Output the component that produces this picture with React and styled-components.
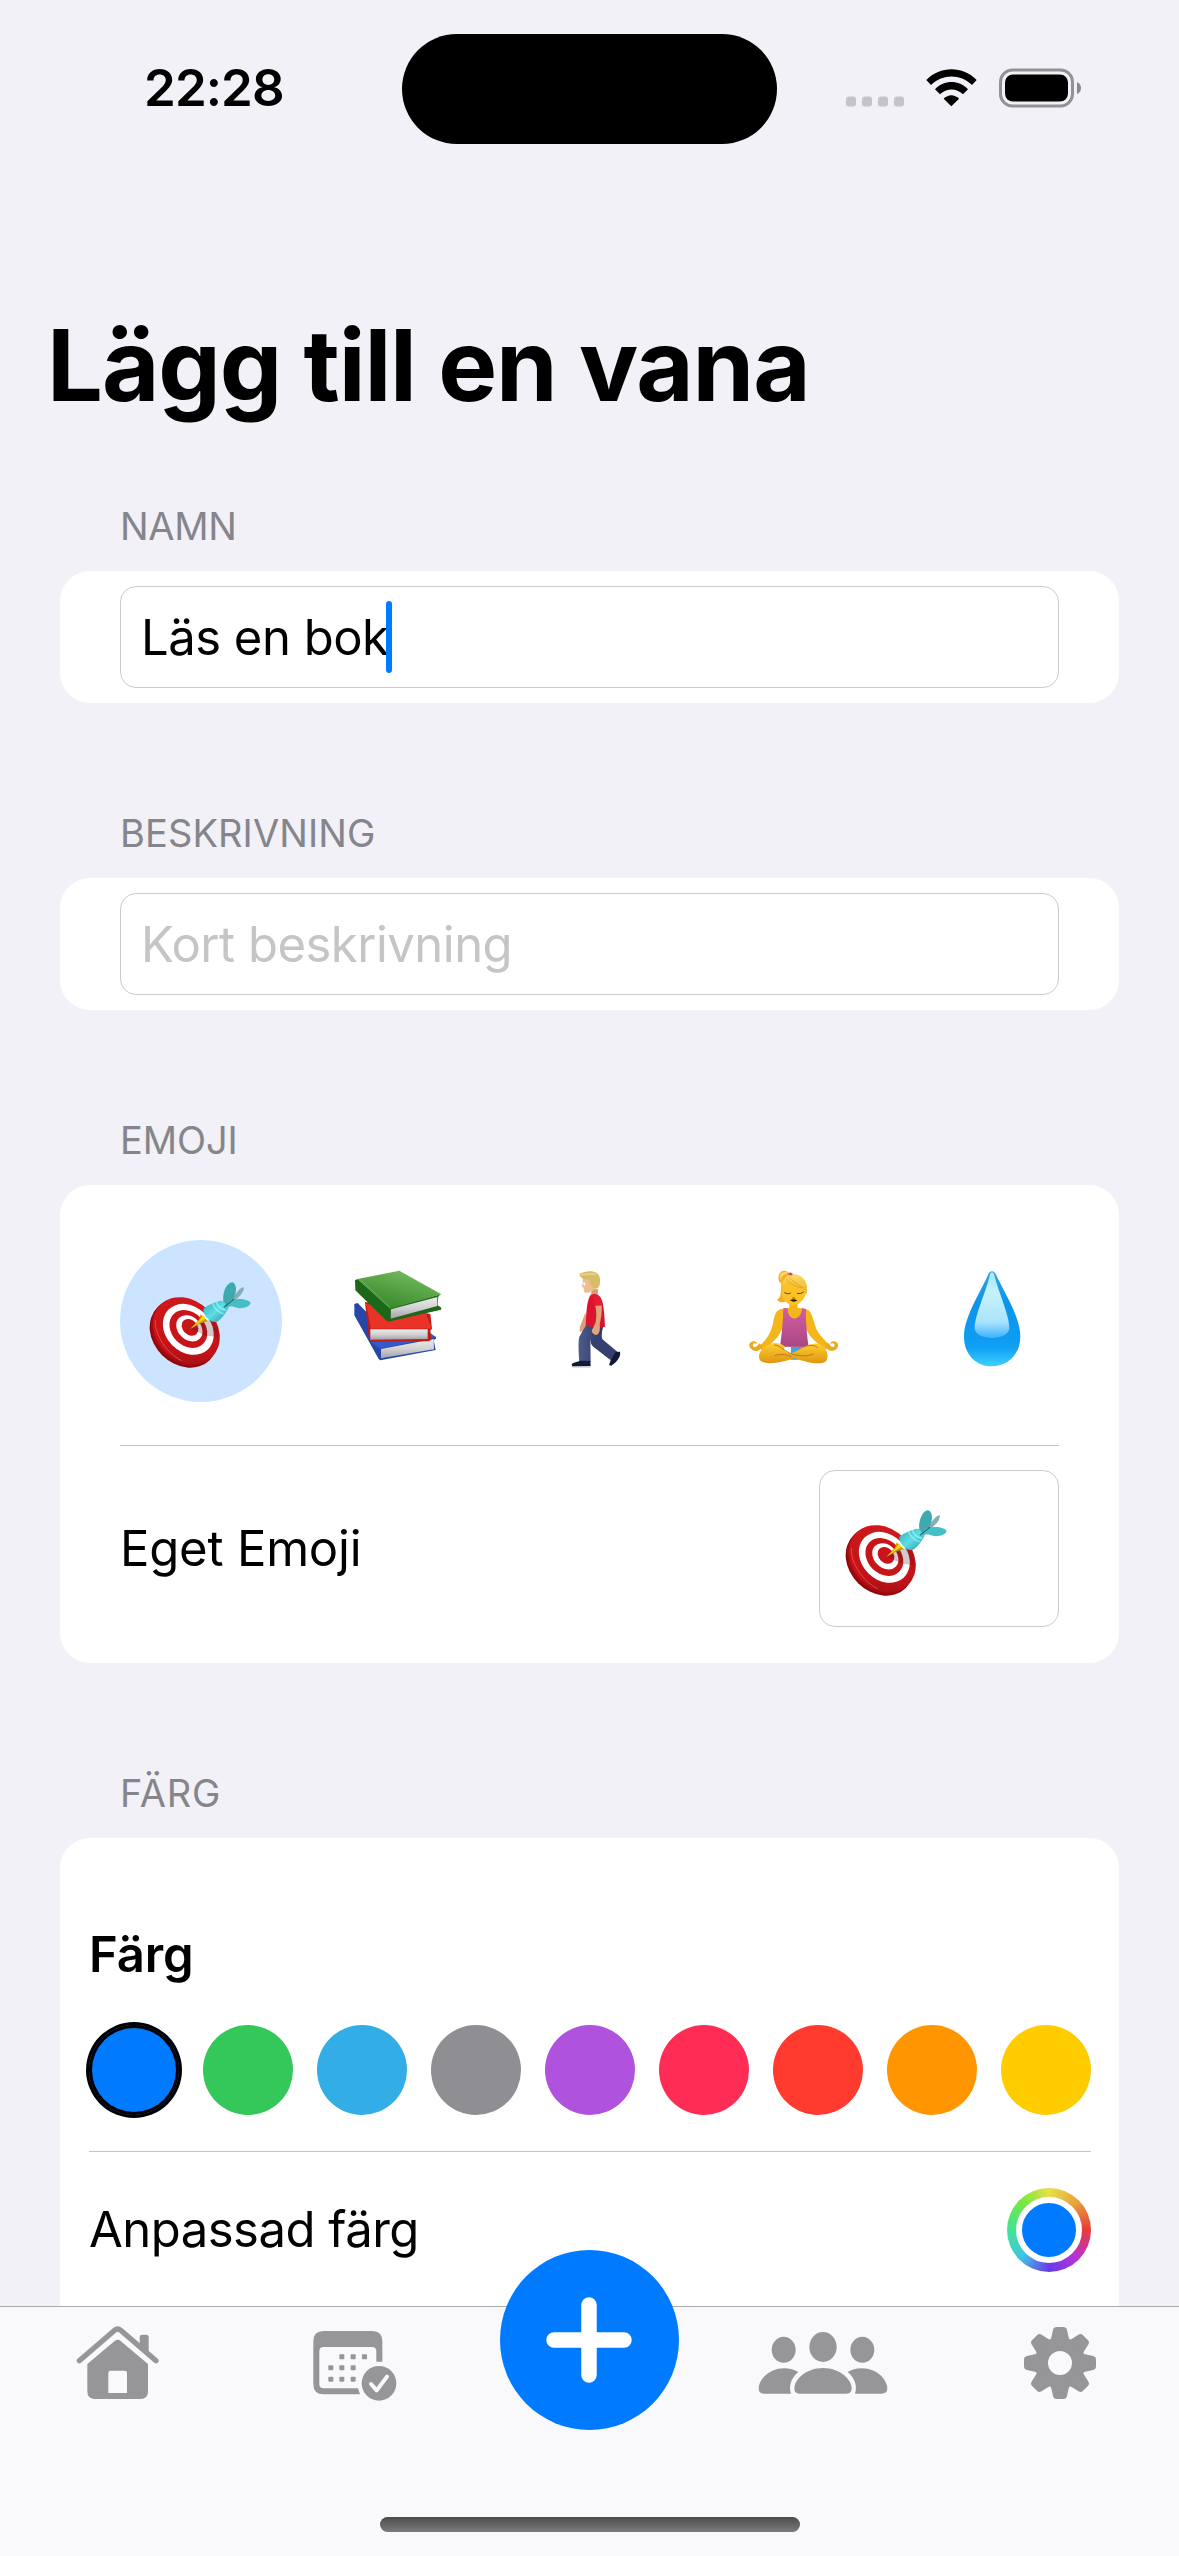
import React from "react";
import styled, { createGlobalStyle } from "styled-components";

const GlobalStyle = createGlobalStyle`
  * { box-sizing: border-box; }
  body { margin: 0; background: #f2f1f7; }
`;

const Screen = styled.div`
  width: 1179px;
  height: 2556px;
  display: flex;
  flex-direction: column;
  overflow: hidden;
  background: #f2f1f7;
  color: #000;
  font-family: Inter, "Liberation Sans", sans-serif;
`;

const StatusBar = styled.header`
  display: grid;
  grid-template-columns: 402px 375px 402px;
  align-items: center;
  height: 144px;
  padding-top: 34px;
  flex: none;
`;

const Clock = styled.div`
  padding: 0 0 2px 144px;
  font-size: 51px;
  line-height: 60px;
  font-weight: 600;
  letter-spacing: -0.9px;
`;

const Island = styled.div`
  height: 110px;
  border-radius: 55px;
  background: #000;
`;

const StatusIcons = styled.div`
  display: flex;
  align-items: center;
  padding: 0 0 2px 69px;
`;

const Content = styled.main`
  flex: 1;
  min-height: 0;
  overflow: hidden;
`;

const Title = styled.h1`
  margin: 161px 0 -29px 47px;
  font-size: 99px;
  line-height: 120px;
  font-weight: 700;
  letter-spacing: -1.1px;
  white-space: nowrap;
`;

const Section = styled.section`
  margin: 107px 60px 0;
`;

const SectionLabel = styled.h2`
  margin: 0 0 22px 60px;
  font-size: 38px;
  line-height: 46px;
  font-weight: 400;
  letter-spacing: ${(p) => p.$spacing || "-0.3px"};
  color: #85858b;
`;

const Card = styled.div`
  border-radius: 30px;
  background: #fff;
  padding: ${(p) => p.$padding};
  height: ${(p) => p.$height};
`;

const Field = styled.div`
  display: flex;
  align-items: center;
  height: 102px;
  padding-left: 20px;
  border: 1px solid #cbcbcd;
  border-radius: 16px;
  font-size: 49px;
  letter-spacing: ${(p) => p.$spacing};
  color: ${(p) => (p.$placeholder ? "#c5c5c7" : "#000")};
`;

const Caret = styled.span`
  width: 6px;
  height: 72px;
  margin-left: -2px;
  border-radius: 3px;
  background: #007aff;
`;

const EmojiRow = styled.div`
  display: flex;
  gap: 35.7px;
  margin-right: -20px;
`;

const EmojiChoice = styled.button`
  display: flex;
  align-items: center;
  justify-content: center;
  flex: none;
  width: 162px;
  height: 162px;
  padding: 0;
  border: 0;
  border-radius: 50%;
  background: ${(p) => (p.$selected ? "#cce4ff" : "transparent")};
`;

const Divider = styled.hr`
  height: 1px;
  margin: ${(p) => p.$margin};
  border: 0;
  background: #c4c4c7;
`;

const Row = styled.div`
  display: flex;
  align-items: center;
  justify-content: space-between;
`;

const RowText = styled.span`
  font-size: 49px;
  line-height: 60px;
  letter-spacing: ${(p) => p.$spacing};
`;

const EmojiField = styled.div`
  display: flex;
  align-items: center;
  width: 240px;
  height: 157px;
  padding-left: 17px;
  border: 1px solid #cbcbcd;
  border-radius: 16px;
`;

const ColorTitle = styled.h3`
  margin: 0 0 40px 0;
  font-size: 49px;
  line-height: 60px;
  font-weight: 600;
  letter-spacing: -0.1px;
`;

const Swatches = styled.div`
  display: flex;
  justify-content: space-between;
`;

const Swatch = styled.button`
  width: 90px;
  height: 90px;
  padding: 0;
  border: 0;
  border-radius: 50%;
  background: ${(p) => p.$color};
  box-shadow: ${(p) => (p.$selected ? "inset 0 0 0 3px #000, 0 0 0 3px #000" : "none")};
`;

const ColorWell = styled.div`
  display: grid;
  place-items: center;
  width: 84px;
  height: 84px;
  border-radius: 50%;
  background: conic-gradient(#e8e04a, #e8a03c 45deg, #e83a3a 90deg, #b832d8 135deg, #6a3ae8 180deg, #40c4e4 225deg, #40e494 270deg, #78e83c 318deg, #e8e04a);
`;

const ColorWellCenter = styled.div`
  width: 66px;
  height: 66px;
  border: 6px solid #fff;
  border-radius: 50%;
  background: #007aff;
`;

const TabBar = styled.nav`
  position: relative;
  flex: none;
  height: 250px;
  border-top: 1px solid #acacae;
  background: #f9f9fb;
`;

const Tabs = styled.div`
  display: grid;
  grid-template-columns: repeat(5, 1fr);
  justify-items: center;
  height: 210px;
`;

const Tab = styled.div`
  padding-top: 13px;
`;

const AddButton = styled.button`
  display: grid;
  place-items: center;
  width: 179px;
  height: 180px;
  margin-top: -57px;
  padding: 0;
  border: 0;
  border-radius: 50%;
  background: #007aff;
`;

const HomeIndicator = styled.div`
  width: 420px;
  height: 15px;
  margin: 0 auto;
  border-radius: 8px;
  background: linear-gradient(#4c4c4d, #7b7b7c);
`;

const GRAY = "#969698";

const SignalDots = () => (
  <svg width="58" height="40" viewBox="0 0 58 40">
    {[0, 16, 32, 48].map((x) => (
      <rect key={x} x={x} y="28.5" width="10" height="10" rx="3" fill="#c4c3c8" />
    ))}
  </svg>
);

const WifiIcon = styled.svg`
  margin-left: 22px;
`;

const BatteryIcon = styled.svg`
  margin-left: 21px;
`;

const Target = () => (
  <svg width="120" height="120" viewBox="123 123 360 360">
    <defs>
      <linearGradient id="tface" x1="0" y1="0" x2="1" y2="1">
        <stop offset="0" stopColor="#d21a1c" />
        <stop offset=".7" stopColor="#c41218" />
        <stop offset="1" stopColor="#8d1014" />
      </linearGradient>
      <linearGradient id="tdart" x1="0" y1="0" x2="1" y2="1">
        <stop offset="0" stopColor="#35a9b6" />
        <stop offset=".5" stopColor="#5fdde6" />
        <stop offset="1" stopColor="#2b8e99" />
      </linearGradient>
    </defs>
    <ellipse cx="250" cy="342" rx="111" ry="90" transform="rotate(45 250 342)" fill="#8c0508" />
    <ellipse cx="254" cy="337" rx="111" ry="91" transform="rotate(45 254 337)" fill="#a30a0d" />
    <ellipse cx="259" cy="332" rx="110" ry="90" transform="rotate(45 259 332)" fill="url(#tface)" />
    <path d="M166 300C164 345 200 400 245 422" fill="none" stroke="#e8534f" strokeWidth="2.5" />
    <ellipse cx="265" cy="328" rx="84" ry="68" transform="rotate(45 265 328)" fill="#fff" />
    <ellipse cx="265" cy="327" rx="63" ry="50" transform="rotate(45 265 327)" fill="#c8151a" />
    <ellipse cx="268" cy="325" rx="44" ry="34" transform="rotate(45 268 325)" fill="#fff" />
    <ellipse cx="270" cy="322" rx="28" ry="22" transform="rotate(45 270 322)" fill="#c8151a" />
    <path d="M272 326L312 345C325 352 345 345 354 355C357 330 350 311 338 298L308 305Z" fill="#3d1518" opacity=".23" />
    <path d="M270 327L297 299L302 283L324 304L304 309Z" fill="#c99a00" />
    <path d="M272 326L299 301L310 286L316 296L301 306Z" fill="#ffd60a" />
    <path d="M310 267C323 254 340 250 359 242L383 244L386 263C376 281 365 297 351 305C335 312 308 288 310 267Z" fill="url(#tdart)" />
    <path d="M338 252C345 266 357 279 371 281M349 247C354 260 363 269 378 271" fill="none" stroke="#8af4f7" strokeWidth="4" />
    <path d="M395 240C408 217 424 200 431 202C434 212 422 229 401 244Z" fill="#83aeb4" />
    <path d="M370 243C366 215 382 186 397 187C411 191 411 219 400 235L378 255Z" fill="#3fa9b0" />
    <path d="M397 240C419 232 449 240 452 249C447 265 415 269 397 259L377 262Z" fill="#45bec6" />
    <path d="M372 262L402 237" stroke="#246d78" strokeWidth="4" />
  </svg>
);

const Books = () => (
  <svg width="120" height="120" viewBox="716 123 360 360">
    <defs>
      <linearGradient id="bgreen" x1="0" y1="1" x2=".6" y2="0">
        <stop offset="0" stopColor="#2c7f22" />
        <stop offset="1" stopColor="#72b95c" />
      </linearGradient>
      <linearGradient id="bpage" x1="0" y1="0" x2="0" y2="1">
        <stop offset="0" stopColor="#ececec" />
        <stop offset=".5" stopColor="#d2d2d4" />
        <stop offset="1" stopColor="#a2a2a6" />
      </linearGradient>
    </defs>
    <path d="M762 252L772 249L860 340L1007 350L1007 356L1000 360L1006 390L840 421L835 417L762 286Z" fill="#2747a8" />
    <path d="M811 366L840 386L1007 352L975 328Z" fill="#3559c8" />
    <path d="M842 387L1000 357L1001 388L842 415Z" fill="url(#bpage)" />
    <path d="M794 246L812 249L990 282L995 326L990 332L993 359L985 364L813 364L806 358Z" fill="#be1b15" />
    <path d="M797 252L812 326L995 326L976 278Z" fill="#e93328" />
    <path d="M810 328L982 328L982 357L810 359Z" fill="url(#bpage)" />
    <path d="M764 181L772 177L868 264L1022 223L1014 229L1012 256L1023 263L1022 269L864 305L857 301L765 211Z" fill="#1c6818" />
    <path d="M772 177L897 152L1023 223L868 266Z" fill="url(#bgreen)" />
    <path d="M782 181L870 262" stroke="#77b766" strokeWidth="2" />
    <path d="M872 268L1011 231L1011 258L871 296Z" fill="url(#bpage)" />
  </svg>
);

const Walker = () => (
  <svg width="120" height="120" viewBox="49 63 360 360">
    <defs>
      <linearGradient id="wjean" x1="0" y1="0" x2="1" y2="0">
        <stop offset="0" stopColor="#4d5c8c" />
        <stop offset="1" stopColor="#2d3666" />
      </linearGradient>
    </defs>
    <path d="M197 218L181 260L180 276L190 273L204 245Z" fill="#dba177" />
    <path d="M213 290L249 258C247 285 244 291 250 299L294 336L272 360L221 320C212 312 211 300 213 290Z" fill="#354071" />
    <path d="M199 255L250 260C247 282 228 294 212 301L213 366L179 366C177 340 175 304 179 290Z" fill="url(#wjean)" />
    <path d="M156 372C165 366 175 365 181 362L212 363L213 379L158 381Z" fill="#101a33" />
    <path d="M156 379L212 379L211 383L157 383Z" fill="#d8d8dc" />
    <path d="M274 358L288 336L301 335C304 344 297 362 275 377L268 375Z" fill="#101a33" />
    <path d="M217 148L236 148L233 166L213 166Z" fill="#d79b70" />
    <path d="M188 112L190 129L186 139L191 143L194 157C201 161 215 157 222 149L235 128L224 105Z" fill="#edbd94" />
    <ellipse cx="194" cy="132" rx="3" ry="5" fill="#fff" />
    <path d="M180 101C193 96 206 92 222 95C243 98 244 125 239 137C235 149 221 149 218 140C215 133 208 128 209 119C197 118 179 116 180 101Z" fill="#d8bc66" />
    <path d="M184 104C198 106 211 98 229 103" fill="none" stroke="#ead78b" strokeWidth="5" />
    <path d="M211 167C225 156 243 162 249 188C254 213 255 239 256 260C237 265 210 260 198 257C200 223 200 188 211 167Z" fill="#db152f" />
    <path d="M226 196L246 196C248 222 242 243 240 254C242 267 240 282 230 285C219 284 212 273 220 265L228 247C231 228 231 210 226 196Z" fill="#dea57b" />
    <path d="M222 170C220 185 222 192 226 197L247 196C248 180 240 163 227 164Z" fill="#e41d33" />
  </svg>
);

const Yoga = () => (
  <svg width="120" height="120" viewBox="642 63 360 360">
    <defs>
      <linearGradient id="ytop" x1="0" y1="0" x2="0" y2="1">
        <stop offset="0" stopColor="#d55d9f" />
        <stop offset="1" stopColor="#a94884" />
      </linearGradient>
      <linearGradient id="yleg" x1="0" y1="0" x2="0" y2="1">
        <stop offset="0" stopColor="#ffd132" />
        <stop offset="1" stopColor="#df9410" />
      </linearGradient>
      <linearGradient id="yhair" x1="0" y1="0" x2="0" y2="1">
        <stop offset="0" stopColor="#ffdc66" />
        <stop offset="1" stopColor="#edac1c" />
      </linearGradient>
    </defs>
    <path d="M808 182H833V203L859 208C877 213 879 242 890 269C902 291 918 304 930 315L918 328C896 314 871 295 860 270H784C774 297 745 321 725 331L715 321C735 304 751 284 758 255C762 229 767 207 788 206L808 203Z" fill="#f4b51d" />
    <path d="M690 309C698 301 709 303 713 312C704 307 697 310 699 319C704 326 713 318 718 310L727 317C725 330 705 339 695 328C687 323 686 312 690 309Z" fill="#eda91c" />
    <path d="M952 309C945 300 932 303 930 312C939 307 946 310 943 319C938 325 930 318 925 309L916 317C917 329 938 338 948 328C954 324 956 314 952 309Z" fill="#eda91c" />
    <path d="M790 205L803 204C801 244 843 248 846 204L858 207C857 237 860 280 866 321L780 320C785 284 790 242 790 205Z" fill="url(#ytop)" />
    <path d="M813 321H844L836 359H812Z" fill="#48a1d9" />
    <path d="M751 312C718 325 712 349 720 361C735 379 796 365 824 354C862 369 906 377 919 362C929 345 919 320 895 311C865 309 849 325 822 337C803 346 786 331 795 320C780 307 763 308 751 312Z" fill="url(#yleg)" />
    <path d="M762 315C781 315 792 334 818 343C844 349 867 349 881 341M814 350C790 340 779 343 764 347M841 326C862 312 889 315 893 324" fill="none" stroke="#bf7718" strokeWidth="3" />
    <path d="M812 105C800 87 782 89 777 105C773 118 777 130 786 129L782 158C783 168 776 177 771 179C780 190 794 189 802 180L813 190Z" fill="#eeb02a" />
    <path d="M780 106C786 94 800 94 808 101C796 98 784 108 782 122Z" fill="#ffd863" />
    <path d="M783 128C780 173 798 195 821 195C843 194 860 171 860 144L832 112L801 106Z" fill="#fcc125" />
    <path d="M782 157C784 118 804 99 825 103C858 107 868 143 858 166C856 157 854 148 846 144C824 139 806 128 800 117C800 134 789 142 782 157Z" fill="url(#yhair)" />
    <path d="M807 111C816 124 834 134 851 144M800 117C807 128 824 139 846 144" fill="none" stroke="#c98d1b" strokeWidth="1.500" />
    <path d="M802 102L811 97L819 102L814 107Z" fill="#c64d7c" />
    <path d="M793 157C799 162 806 162 812 159M831 160C839 162 846 160 851 155M817 174L824 174" fill="none" stroke="#5b3b15" strokeWidth="3" />
    <path d="M810 181Q821 175 832 181Q822 189 810 181Z" fill="#32130d" />
  </svg>
);

const Droplet = () => (
  <svg width="120" height="120" viewBox="455 63 360 360">
    <defs>
      <linearGradient id="dblue" x1="0" y1="0" x2="0" y2="1">
        <stop offset="0" stopColor="#2ea4ea" />
        <stop offset=".35" stopColor="#0b93ea" />
        <stop offset=".8" stopColor="#0f9ff4" />
        <stop offset="1" stopColor="#3fd0ff" />
      </linearGradient>
      <linearGradient id="dshine" x1="0" y1="0" x2="0" y2="1">
        <stop offset="0" stopColor="#a6e6f8" />
        <stop offset=".3" stopColor="#c6f3fa" />
        <stop offset=".75" stopColor="#abe4fe" />
        <stop offset="1" stopColor="#3db2fa" />
      </linearGradient>
    </defs>
    <path d="M625 100C630 92 640 92 645 100C669 153 720 229 720 290C720 344 681 379 635 379C588 379 551 344 551 290C551 229 605 150 625 100Z" fill="url(#dblue)" />
    <path d="M629 101Q635 93 641 101C652 151 687 223 687 264C686 304 584 304 583 264C583 223 620 151 629 101Z" fill="url(#dshine)" />
  </svg>
);

const HouseIcon = () => (
  <svg width="100" height="90" viewBox="84 90 300 270" fill={GRAY}>
    <path d="M118 212L224 121Q233 113 242 121L348 212" fill="none" stroke={GRAY} strokeWidth="16" strokeLinecap="round" strokeLinejoin="round" />
    <path d="M299 166V141Q299 134 306 134H319Q326 134 326 141V190Z" />
    <path fillRule="evenodd" d="M142 222L224 153Q233 145 242 153L324 222V304Q324 327 301 327H165Q142 327 142 304ZM205 309H261V249Q261 242 254 242H212Q205 242 205 249Z" />
  </svg>
);

const CalendarIcon = () => (
  <svg width="100" height="90" viewBox="791 90 300 270" fill={GRAY}>
    <path fillRule="evenodd" d="M819 154Q819 123 850 123H995Q1026 123 1026 154V215H1008V184Q1008 171 995 171H850Q837 171 837 184V282Q837 295 850 295H953L959 313H850Q819 313 819 282Z" />
    {[[897, 193], [931, 193], [965, 193], [864, 226], [897, 226], [931, 226], [864, 260], [897, 260], [931, 260]].map(([x, y]) => (
      <rect key={`${x}-${y}`} x={x} y={y} width="15" height="15" rx="2.5" />
    ))}
    <circle cx="1016" cy="280" r="52" />
    <path d="M992 282L1009 301L1040 260" fill="none" stroke="#f9f9fb" strokeWidth="12" strokeLinecap="round" strokeLinejoin="round" />
  </svg>
);

const PeopleIcon = () => (
  <svg width="150" height="90" viewBox="91 90 450 270" fill={GRAY}>
    <ellipse cx="192" cy="179.500" rx="36" ry="39" />
    <ellipse cx="428" cy="179.500" rx="36" ry="39" />
    <ellipse cx="310" cy="171" rx="41" ry="45" />
    <path d="M236 246C217 233 184 230 158 242C133 253 117 277 117 295Q117 311 134 311H214C206 288 215 264 236 246Z" />
    <path d="M384 246C403 233 436 230 462 242C487 253 503 277 503 295Q503 311 486 311H406C414 288 405 264 384 246Z" />
    <path d="M242 311Q224 311 224 296C224 268 259 234 310 234C361 234 396 268 396 296Q396 311 378 311Z" />
  </svg>
);

const GearIcon = () => (
  <svg width="100" height="90" viewBox="873 90 300 270" fill={GRAY}>
    <defs>
      <path id="tooth" d="M990 160L999 120Q1001 111 1010 111H1030Q1039 111 1041 120L1050 160Z" />
    </defs>
    <path
      fillRule="evenodd"
      d="M1020 142A77 77 0 1 0 1020 296A77 77 0 1 0 1020 142ZM1020 183A36 36 0 1 1 1020 255A36 36 0 1 1 1020 183Z"
    />
    {[0, 45, 90, 135, 180, 225, 270, 315].map((a) => (
      <use key={a} href="#tooth" transform={`rotate(${a} 1020 219)`} />
    ))}
  </svg>
);

const EMOJIS = [Target, Books, Walker, Yoga, Droplet];
const COLORS = ["#007aff", "#34c759", "#32ade6", "#8e8e93", "#af52de", "#ff2d55", "#ff3b30", "#ff9500", "#ffcc00"];

export default function App() {
  return (
    <Screen>
      <GlobalStyle />
      <StatusBar>
        <Clock>22:28</Clock>
        <Island />
        <StatusIcons>
          <SignalDots />
          <WifiIcon width="52" height="38" viewBox="288 56 156 114">
            <path d="M289 89C330 46 399 46 440 89L426 104C390 70 339 70 303 104Z" />
            <path d="M315 117C343 88 386 88 414 117L399 132C379 113 350 113 330 132Z" />
            <path d="M341 145C354 131 374 131 387 145L364 168Z" />
          </WifiIcon>
          <BatteryIcon width="83" height="40" viewBox="0 0 83 40">
            <rect x="1.500" y="2" width="72" height="36" rx="12" fill="none" stroke="#929195" strokeWidth="3" />
            <rect x="6" y="6.500" width="63" height="27" rx="8" />
            <path d="M78 14Q82 16 82 20Q82 24 78 26Z" fill="#88878b" />
          </BatteryIcon>
        </StatusIcons>
      </StatusBar>
      <Content>
        <Title>Lägg till en vana</Title>
        <Section>
          <SectionLabel>NAMN</SectionLabel>
          <Card $padding="15px 60px" $height="132px">
            <Field $spacing="-0.5px">
              Läs en bok
              <Caret />
            </Field>
          </Card>
        </Section>
        <Section>
          <SectionLabel $spacing="0.1px">BESKRIVNING</SectionLabel>
          <Card $padding="15px 60px" $height="132px">
            <Field $placeholder $spacing="-0.5px">Kort beskrivning</Field>
          </Card>
        </Section>
        <Section>
          <SectionLabel $spacing="-0.1px">EMOJI</SectionLabel>
          <Card $padding="55px 60px 36px" $height="478px">
            <EmojiRow>
              {EMOJIS.map((Emoji, i) => (
                <EmojiChoice key={i} $selected={i === 0}>
                  <Emoji />
                </EmojiChoice>
              ))}
            </EmojiRow>
            <Divider $margin="43px 0 24px" />
            <Row>
              <RowText $spacing="-0.2px">Eget Emoji</RowText>
              <EmojiField>
                <Target />
              </EmojiField>
            </Row>
          </Card>
        </Section>
        <Section>
          <SectionLabel $spacing="0.8px">FÄRG</SectionLabel>
          <Card $padding="87px 28px 0 29px" $height="520px">
            <ColorTitle>Färg</ColorTitle>
            <Swatches>
              {COLORS.map((color, i) => (
                <Swatch key={color} $color={color} $selected={i === 0} />
              ))}
            </Swatches>
            <Divider $margin="36px 0" />
            <Row>
              <RowText $spacing="-0.5px">Anpassad färg</RowText>
              <ColorWell>
                <ColorWellCenter />
              </ColorWell>
            </Row>
          </Card>
        </Section>
      </Content>
      <TabBar>
        <Tabs>
          <Tab><HouseIcon /></Tab>
          <Tab><CalendarIcon /></Tab>
          <AddButton>
            <svg width="90" height="90" viewBox="0 0 90 90" stroke="#fff" strokeWidth="15.500" strokeLinecap="round">
              <path d="M45 10V80M10 45H80" />
            </svg>
          </AddButton>
          <Tab><PeopleIcon /></Tab>
          <Tab><GearIcon /></Tab>
        </Tabs>
        <HomeIndicator />
      </TabBar>
    </Screen>
  );
}
